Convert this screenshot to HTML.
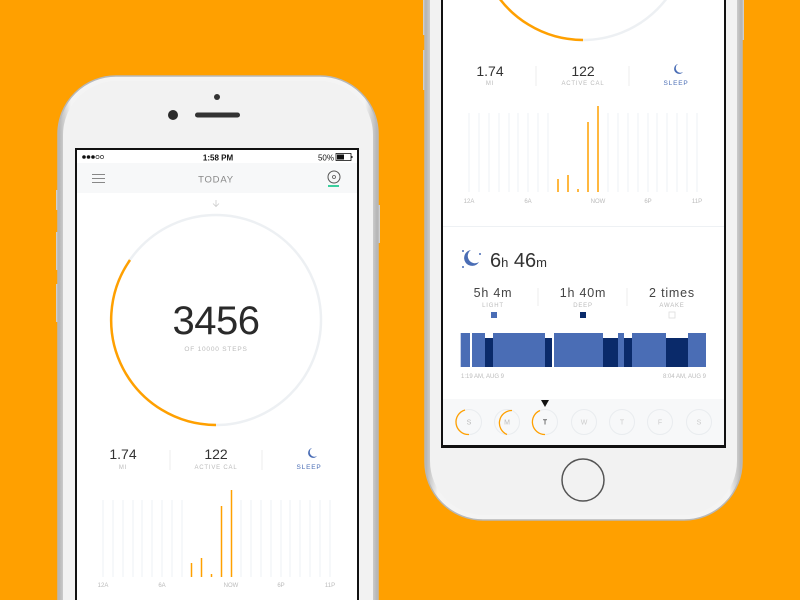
<!DOCTYPE html>
<html><head><meta charset="utf-8"><style>
html,body{margin:0;padding:0;background:#FFA000;width:800px;height:600px;overflow:hidden;}
svg{display:block;overflow:hidden}
text{font-family:"Liberation Sans",sans-serif}
</style></head><body>
<svg width="800" height="600" viewBox="0 0 800 600" xmlns="http://www.w3.org/2000/svg">
<defs>
<linearGradient id="edge" x1="0" x2="1" y1="0" y2="0">
<stop offset="0" stop-color="#b0b0b0"/><stop offset="0.04" stop-color="#f4f4f4"/><stop offset="0.96" stop-color="#f4f4f4"/><stop offset="1" stop-color="#b0b0b0"/>
</linearGradient>
</defs>
<rect width="800" height="600" fill="#FFA000"/>

<!-- LEFT PHONE -->
<rect x="56" y="190" width="4" height="20" fill="#cfcfcf"/>
<rect x="56" y="232" width="4" height="38" fill="#cfcfcf"/>
<rect x="56" y="284" width="4" height="38" fill="#cfcfcf"/>
<rect x="376" y="205" width="4" height="38" fill="#cfcfcf"/>
<rect x="58" y="76" width="320" height="640" rx="58" fill="url(#edge)" stroke="#b8b8b8" stroke-width="1.5"/>
<rect x="63" y="81" width="310" height="630" rx="54" fill="#f2f2f2"/>
<circle cx="217" cy="97" r="3" fill="#333"/>
<circle cx="173" cy="115" r="5" fill="#2a2a2a"/>
<rect x="195" y="112.5" width="45" height="5" rx="2.5" fill="#333"/>
<rect x="75" y="148" width="284" height="460" fill="#111"/>
<rect x="77" y="150" width="280" height="460" fill="#fff"/>
<g fill="#111"><circle cx="84" cy="157" r="1.8"/><circle cx="88.5" cy="157" r="1.8"/><circle cx="93" cy="157" r="1.8"/></g>
<g fill="none" stroke="#111" stroke-width="0.6"><circle cx="97.5" cy="157" r="1.6"/><circle cx="102" cy="157" r="1.6"/></g>
<text x="218" y="160.5" font-size="8" font-weight="bold" text-anchor="middle" fill="#111">1:58 PM</text>
<text x="334" y="160.5" font-size="8" text-anchor="end" fill="#111">50%</text>
<rect x="336" y="153.5" width="15" height="7" fill="none" stroke="#111" stroke-width="0.8"/>
<rect x="337" y="154.5" width="7" height="5" fill="#111"/>
<rect x="351.5" y="156" width="1" height="2" fill="#111"/>
<rect x="77" y="163" width="280" height="30" fill="#f7f8f9"/>
<g stroke="#888" stroke-width="1"><line x1="92" y1="174.5" x2="105" y2="174.5"/><line x1="92" y1="178.5" x2="105" y2="178.5"/><line x1="92" y1="182.5" x2="105" y2="182.5"/></g>
<text x="216" y="182.5" font-size="9.5" letter-spacing="0.8" text-anchor="middle" fill="#888">TODAY</text>
<circle cx="334" cy="177" r="6" fill="none" stroke="#555" stroke-width="1"/>
<circle cx="334" cy="177" r="1.5" fill="none" stroke="#555" stroke-width="0.8"/>
<rect x="328" y="185" width="11" height="2" fill="#3ccf9e"/>
<path d="M216 200 v6 M213 203.5 l3 3 l3 -3" fill="none" stroke="#ccc" stroke-width="0.8"/>
<circle cx="216" cy="320" r="105" fill="none" stroke="#edf0f3" stroke-width="2.5"/>
<path d="M216 425 A105 105 0 0 1 130 260" fill="none" stroke="#FFA000" stroke-width="2.5"/>
<text x="216" y="334" font-size="40" text-anchor="middle" fill="#2a2a2a" letter-spacing="-0.5">3456</text>
<text x="216" y="351" font-size="6.5" letter-spacing="0.8" text-anchor="middle" fill="#bbb">OF 10000 STEPS</text>
<text x="123" y="459" font-size="14" text-anchor="middle" fill="#333">1.74</text>
<text x="123" y="469" font-size="6" letter-spacing="0.8" text-anchor="middle" fill="#bbb">MI</text>
<text x="216" y="459" font-size="14" text-anchor="middle" fill="#333">122</text>
<text x="216" y="469" font-size="6" letter-spacing="0.8" text-anchor="middle" fill="#bbb">ACTIVE CAL</text>
<line x1="170" y1="450" x2="170" y2="470" stroke="#eee"/>
<line x1="262" y1="450" x2="262" y2="470" stroke="#eee"/>
<path d="M312 448 a5 5 0 1 0 5 8 a4 4 0 1 1 -5 -8z" fill="#4a6db5"/>
<text x="309" y="469" font-size="6.5" letter-spacing="0.8" text-anchor="middle" fill="#4a6db5">SLEEP</text>
<g stroke="#eef1f4" stroke-width="1">
<line x1="103" y1="500" x2="103" y2="577"/><line x1="113" y1="500" x2="113" y2="577"/><line x1="123" y1="500" x2="123" y2="577"/><line x1="133" y1="500" x2="133" y2="577"/><line x1="142" y1="500" x2="142" y2="577"/><line x1="152" y1="500" x2="152" y2="577"/><line x1="162" y1="500" x2="162" y2="577"/><line x1="172" y1="500" x2="172" y2="577"/><line x1="182" y1="500" x2="182" y2="577"/><line x1="241" y1="500" x2="241" y2="577"/><line x1="251" y1="500" x2="251" y2="577"/><line x1="261" y1="500" x2="261" y2="577"/><line x1="271" y1="500" x2="271" y2="577"/><line x1="281" y1="500" x2="281" y2="577"/><line x1="290" y1="500" x2="290" y2="577"/><line x1="300" y1="500" x2="300" y2="577"/><line x1="310" y1="500" x2="310" y2="577"/><line x1="320" y1="500" x2="320" y2="577"/><line x1="330" y1="500" x2="330" y2="577"/>
</g>
<g stroke="#FFA000" stroke-width="1.5">
<line x1="191.5" y1="563" x2="191.5" y2="577"/><line x1="201.5" y1="558" x2="201.5" y2="577"/><line x1="211.5" y1="574" x2="211.5" y2="577"/><line x1="221.5" y1="506" x2="221.5" y2="577"/><line x1="231.5" y1="490" x2="231.5" y2="577"/>
</g>
<g font-size="6" fill="#bbb" text-anchor="middle"><text x="103" y="587">12A</text><text x="162" y="587">6A</text><text x="231" y="587">NOW</text><text x="281" y="587">6P</text><text x="330" y="587">11P</text></g>

<!-- RIGHT PHONE -->
<rect x="423" y="0" width="4" height="35" fill="#cfcfcf"/>
<rect x="423" y="50" width="4" height="40" fill="#cfcfcf"/>
<rect x="740" y="0" width="4" height="40" fill="#cfcfcf"/>
<rect x="425" y="-120" width="317" height="640" rx="58" fill="url(#edge)" stroke="#b8b8b8" stroke-width="1.5"/>
<rect x="430" y="-115" width="307" height="630" rx="54" fill="#f2f2f2"/>
<rect x="441" y="-5" width="285" height="453" fill="#111"/>
<rect x="443" y="-5" width="281" height="450" fill="#fff"/>
<circle cx="583" cy="-65" r="105" fill="none" stroke="#edf0f3" stroke-width="2.5"/>
<path d="M583 40 A105 105 0 0 1 497 -125" fill="none" stroke="#FFA000" stroke-width="2.5"/>
<text x="490" y="76" font-size="14" text-anchor="middle" fill="#333">1.74</text>
<text x="490" y="85" font-size="6" letter-spacing="0.8" text-anchor="middle" fill="#bbb">MI</text>
<text x="583" y="76" font-size="14" text-anchor="middle" fill="#333">122</text>
<text x="583" y="85" font-size="6" letter-spacing="0.8" text-anchor="middle" fill="#bbb">ACTIVE CAL</text>
<line x1="536" y1="66" x2="536" y2="86" stroke="#eee"/>
<line x1="629" y1="66" x2="629" y2="86" stroke="#eee"/>
<path d="M678 64 a5 5 0 1 0 5 8 a4 4 0 1 1 -5 -8z" fill="#4a6db5"/>
<text x="676" y="85" font-size="6.5" letter-spacing="0.8" text-anchor="middle" fill="#4a6db5">SLEEP</text>
<g stroke="#eef1f4" stroke-width="1">
<line x1="469" y1="113" x2="469" y2="192"/><line x1="479" y1="113" x2="479" y2="192"/><line x1="489" y1="113" x2="489" y2="192"/><line x1="499" y1="113" x2="499" y2="192"/><line x1="509" y1="113" x2="509" y2="192"/><line x1="518" y1="113" x2="518" y2="192"/><line x1="528" y1="113" x2="528" y2="192"/><line x1="538" y1="113" x2="538" y2="192"/><line x1="548" y1="113" x2="548" y2="192"/><line x1="608" y1="113" x2="608" y2="192"/><line x1="618" y1="113" x2="618" y2="192"/><line x1="628" y1="113" x2="628" y2="192"/><line x1="638" y1="113" x2="638" y2="192"/><line x1="648" y1="113" x2="648" y2="192"/><line x1="657" y1="113" x2="657" y2="192"/><line x1="667" y1="113" x2="667" y2="192"/><line x1="677" y1="113" x2="677" y2="192"/><line x1="687" y1="113" x2="687" y2="192"/><line x1="697" y1="113" x2="697" y2="192"/>
</g>
<g stroke="#FFA000" stroke-width="1.5">
<line x1="558" y1="179" x2="558" y2="192"/><line x1="568" y1="175" x2="568" y2="192"/><line x1="578" y1="189" x2="578" y2="192"/><line x1="588" y1="122" x2="588" y2="192"/><line x1="598" y1="106" x2="598" y2="192"/>
</g>
<g font-size="6" fill="#bbb" text-anchor="middle"><text x="469" y="203">12A</text><text x="528" y="203">6A</text><text x="598" y="203">NOW</text><text x="648" y="203">6P</text><text x="697" y="203">11P</text></g>
<line x1="443" y1="226.5" x2="724" y2="226.5" stroke="#eef1f4"/>
<path d="M471 250 a8 8 0 1 0 8 12 a6.5 6.5 0 1 1 -8 -12z" fill="#4a6db5"/>
<circle cx="463" cy="251" r="1" fill="#4a6db5"/><circle cx="480" cy="254" r="1" fill="#4a6db5"/><circle cx="463" cy="267" r="1" fill="#4a6db5"/>
<text x="490" y="267" font-size="20" fill="#333">6<tspan font-size="13">h</tspan> 46<tspan font-size="13">m</tspan></text>
<text x="493" y="297" font-size="12.5" letter-spacing="0.8" text-anchor="middle" fill="#444">5h 4m</text>
<text x="493" y="307" font-size="6" letter-spacing="0.8" text-anchor="middle" fill="#bbb">LIGHT</text>
<rect x="491" y="312" width="6" height="6" fill="#4a6db5"/>
<text x="583" y="297" font-size="12.5" letter-spacing="0.8" text-anchor="middle" fill="#444">1h 40m</text>
<text x="583" y="307" font-size="6" letter-spacing="0.8" text-anchor="middle" fill="#bbb">DEEP</text>
<rect x="580" y="312" width="6" height="6" fill="#0a2a6a"/>
<text x="672" y="297" font-size="12.5" letter-spacing="0.8" text-anchor="middle" fill="#444">2 times</text>
<text x="672" y="307" font-size="6" letter-spacing="0.8" text-anchor="middle" fill="#bbb">AWAKE</text>
<rect x="669" y="312" width="6" height="6" fill="none" stroke="#ddd" stroke-width="0.8"/>
<line x1="538" y1="288" x2="538" y2="306" stroke="#eee"/>
<line x1="627" y1="288" x2="627" y2="306" stroke="#eee"/>
<g fill="#4a6db5">
<rect x="460.7" y="333" width="9.3" height="34"/><rect x="472" y="333" width="13" height="34"/><rect x="493" y="333" width="52" height="34"/><rect x="554" y="333" width="49" height="34"/><rect x="618" y="333" width="6" height="34"/><rect x="632" y="333" width="34" height="34"/><rect x="688" y="333" width="18" height="34"/>
</g>
<g fill="#0a2a6a">
<rect x="485" y="338" width="8" height="29"/><rect x="545" y="338" width="7" height="29"/><rect x="603" y="338" width="15" height="29"/><rect x="624" y="338" width="8" height="29"/><rect x="666" y="338" width="22" height="29"/>
</g>
<text x="461" y="378" font-size="6" fill="#bbb">1:19 AM, AUG 9</text>
<text x="706" y="378" font-size="6" fill="#bbb" text-anchor="end">8:04 AM, AUG 9</text>
<rect x="443" y="399" width="281" height="46" fill="#f7f8f9"/>
<path d="M541 400 h8 l-4 7z" fill="#111"/>
<g fill="none" stroke="#e9ecef" stroke-width="1">
<circle cx="469" cy="422" r="12.5"/><circle cx="507" cy="422" r="12.5"/><circle cx="545" cy="422" r="12.5"/><circle cx="584" cy="422" r="12.5"/><circle cx="622" cy="422" r="12.5"/><circle cx="660" cy="422" r="12.5"/><circle cx="699" cy="422" r="12.5"/>
</g>
<g fill="none" stroke="#FFA000" stroke-width="1.3">
<path d="M469 434.5 A12.5 12.5 0 0 1 465 410"/>
<path d="M507 434.5 A12.5 12.5 0 0 1 512 410.5"/>
<path d="M545 434.5 A12.5 12.5 0 0 1 540 410.5"/>
</g>
<g font-size="7" text-anchor="middle" fill="#ccc">
<text x="469" y="424.5" fill="#bbb">S</text><text x="507" y="424.5" fill="#bbb">M</text><text x="545" y="424.5" fill="#222">T</text><text x="584" y="424.5">W</text><text x="622" y="424.5">T</text><text x="660" y="424.5">F</text><text x="699" y="424.5">S</text>
</g>
<circle cx="583" cy="480" r="21" fill="#f2f2f2" stroke="#555" stroke-width="1.5"/>
</svg>
</body></html>
